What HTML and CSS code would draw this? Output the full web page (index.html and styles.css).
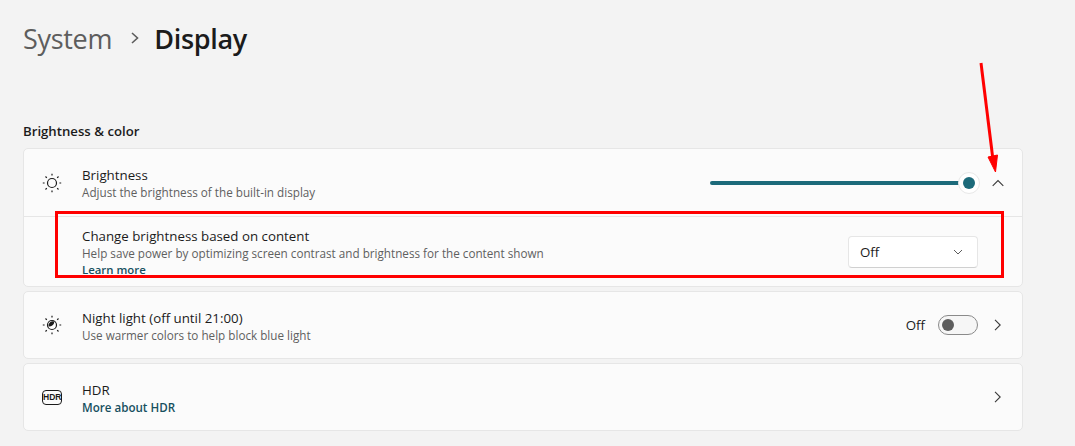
FILE: index.html
```html
<!DOCTYPE html>
<html lang="en">

<head>
    <meta charset="UTF-8">
    <title>Display</title>
    <link rel="stylesheet" href="styles.css">
</head>

<body>
    <main class="page">
        <h1 class="crumbs">
            <span class="crumb-parent">System</span>
            <svg class="crumb-sep" width="10" height="14" viewBox="0 0 10 14">
                <path d="M2 2l5.500 5L2 12" fill="none" stroke="#5c5c5c" stroke-width="1.6" />
            </svg>
            <span>Display</span>
        </h1>

        <h2 class="section-title">Brightness &amp; color</h2>

        <section class="card">
            <div class="row">
                <svg class="row-icon" width="20" height="20" viewBox="0 0 20 20">
                    <circle cx="10" cy="10" r="4.500" fill="none" stroke="#1b1b1b" stroke-width="1.2" />
                    <path d="M10 .8v1.8M10 17.4v1.8M.8 10h1.8M17.4 10h1.8M3.500 3.500l1.300 1.300M15.200 15.200l1.300 1.300M3.500 16.500l1.300-1.300M15.200 4.800l1.300-1.300" stroke="#1b1b1b" stroke-width="1.2" />
                </svg>
                <div class="row-text">
                    <div class="row-name">Brightness</div>
                    <div class="row-desc">Adjust the brightness of the built-in display</div>
                </div>
                <div class="slider">
                    <div class="slider-track"></div>
                    <div class="slider-thumb"></div>
                </div>
                <svg class="chevron" width="12" height="12" viewBox="0 0 12 12">
                    <path d="M.7 8.800L6 3.500l5.300 5.300" fill="none" stroke="#3a3a3a" stroke-width="1.1" />
                </svg>
            </div>
            <div class="row sub-row">
                <div class="row-text">
                    <div class="row-name">Change brightness based on content</div>
                    <div class="row-desc">Help save power by optimizing screen contrast and brightness for the content shown</div>
                    <a class="row-link">Learn more</a>
                </div>
                <div class="dropdown">
                    <span>Off</span>
                    <svg width="10" height="10" viewBox="0 0 10 10">
                        <path d="M1 3l4 4 4-4" fill="none" stroke="#5c5c5c" stroke-width="1" />
                    </svg>
                </div>
            </div>
        </section>

        <section class="card">
            <div class="row row-short">
                <svg class="row-icon" width="20" height="20" viewBox="0 0 20 20">
                    <circle cx="10" cy="10" r="4.500" fill="#fff" stroke="#1b1b1b" stroke-width="1.2" />
                    <path d="M6.500 11.500A6 6 0 0 0 12.500 6.500 4.500 4.500 0 0 0 6.500 11.500z" fill="#1b1b1b" />
                    <path d="M10 .8v1.800M10 17.400v1.800M.8 10h1.800M17.400 10h1.800M3.500 3.500l1.300 1.300M15.200 15.200l1.300 1.300M3.500 16.500l1.300-1.300M15.200 4.800l1.300-1.300" stroke="#1b1b1b" stroke-width="1.2" />
                </svg>
                <div class="row-text">
                    <div class="row-name">Night light (off until 21:00)</div>
                    <div class="row-desc">Use warmer colors to help block blue light</div>
                </div>
                <span class="toggle-label">Off</span>
                <div class="toggle">
                    <div class="toggle-thumb"></div>
                </div>
                <svg class="chevron chevron-next" width="12" height="12" viewBox="0 0 12 12">
                    <path d="M3 .8L8.200 6 3 11.200" fill="none" stroke="#3a3a3a" stroke-width="1.1" />
                </svg>
            </div>
        </section>

        <section class="card">
            <div class="row row-short">
                <div class="row-icon hdr-icon">HDR</div>
                <div class="row-text">
                    <div class="row-name">HDR</div>
                    <a class="row-link">More about HDR</a>
                </div>
                <svg class="chevron" width="12" height="12" viewBox="0 0 12 12">
                    <path d="M3 .8L8.200 6 3 11.200" fill="none" stroke="#3a3a3a" stroke-width="1.1" />
                </svg>
            </div>
        </section>
    </main>

    <!-- red markup drawn over the screenshot -->
    <div class="mark-box"></div>
    <svg class="mark-arrow" width="30" height="120" viewBox="0 0 30 120">
        <path d="M6 3L18 100" stroke="#ff0000" stroke-width="3" />
        <path d="M13 97L22.500 95L20.500 112z" fill="#ff0000" stroke="#ff0000" />
    </svg>
</body>

</html>
```

FILE: styles.css
```css
* {
    box-sizing: border-box;
}

body {
    margin: 0;
    height: 446px;
    overflow: hidden;
    background-color: #f3f3f3;
    color: #1b1b1b;
    font-family: "Open Sans", "Noto Sans", sans-serif;
}

.page {
    width: 1023px;
    padding-left: 23px;
}

.crumbs {
    display: flex;
    align-items: center;
    height: 38px;
    margin: 19px 0 0;
    font-size: 27px;
    font-weight: 600;
    letter-spacing: -0.3px;
}

.crumb-parent {
    color: #5d5d5d;
    font-weight: 500;
}

.crumb-sep {
    margin: 0 14px 0 18px;
}

.section-title {
    margin: 65px 0 7px;
    height: 19px;
    line-height: 19px;
    font-size: 13.2px;
    font-weight: 600;
}

.card {
    margin-bottom: 4px;
    border: 1px solid #e6e6e6;
    border-radius: 5px;
    background-color: #fbfbfb;
}

.row {
    display: flex;
    align-items: center;
    height: 67px;
    padding-right: 18px;
    padding-left: 18px;
}

.row-short {
    height: 66px;
}

.row-icon {
    flex: none;
    width: 20px;
    margin-right: 20px;
}

.row-text {
    flex: 1;
    margin-top: 2px;
}

.row-name {
    font-size: 13.3px;
    line-height: 18px;
}

.row-desc {
    color: #5f5f5f;
    font-size: 11.7px;
    line-height: 17px;
}

.row-link {
    display: block;
    color: #17505f;
    font-size: 11.6px;
    font-weight: 600;
    line-height: 17px;
}

.sub-row {
    height: 70px;
    padding-left: 58px;
    border-top: 1px solid #e6e6e6;
}

.sub-row .row-text {
    margin-top: 2px;
}

.sub-row .row-link {
    font-size: 11.4px;
    line-height: 16px;
}

.slider {
    position: relative;
    width: 270px;
    height: 22px;
}

.slider-track {
    width: 258px;
    height: 4px;
    margin-top: 9px;
    border-radius: 2px;
    background-color: #1c6a7a;
}

.slider-thumb {
    position: absolute;
    top: 0;
    left: 248px;
    width: 22px;
    height: 22px;
    border: 1px solid #e8e8e8;
    border-radius: 50%;
    background-color: #fff;
}

.slider-thumb::after {
    content: "";
    display: block;
    width: 12px;
    height: 12px;
    margin: 4px;
    border-radius: 50%;
    background-color: #1c6a7a;
}

.chevron {
    flex: none;
    margin-left: 12px;
}

.chevron-next {
    margin-left: 14px;
}

.dropdown {
    display: flex;
    align-items: center;
    justify-content: space-between;
    width: 130px;
    height: 32px;
    margin-right: 26px;
    padding: 0 14px 0 11px;
    border: 1px solid #e6e6e6;
    border-bottom-color: #d0d0d0;
    border-radius: 4px;
    background-color: #fff;
    font-size: 13.3px;
}

.toggle-label {
    margin-right: 13px;
    font-size: 13.3px;
}

.toggle {
    width: 40px;
    height: 20px;
    padding: 3px;
    border: 1px solid #8a8a8a;
    border-radius: 10px;
    background-color: #f6f6f6;
}

.toggle-thumb {
    width: 12px;
    height: 12px;
    border-radius: 50%;
    background-color: #5d5d5d;
}

.hdr-icon {
    height: 15px;
    border: 1.500px solid #1b1b1b;
    border-radius: 4px;
    color: #1b1b1b;
    font-family: "Liberation Sans", sans-serif;
    font-size: 8.500px;
    font-weight: 700;
    line-height: 12px;
    text-align: center;
}

.mark-box {
    position: absolute;
    top: 211px;
    left: 55px;
    width: 949px;
    height: 67px;
    border: 3px solid #ff0000;
}

.mark-arrow {
    position: absolute;
    top: 60px;
    left: 975px;
}
```
